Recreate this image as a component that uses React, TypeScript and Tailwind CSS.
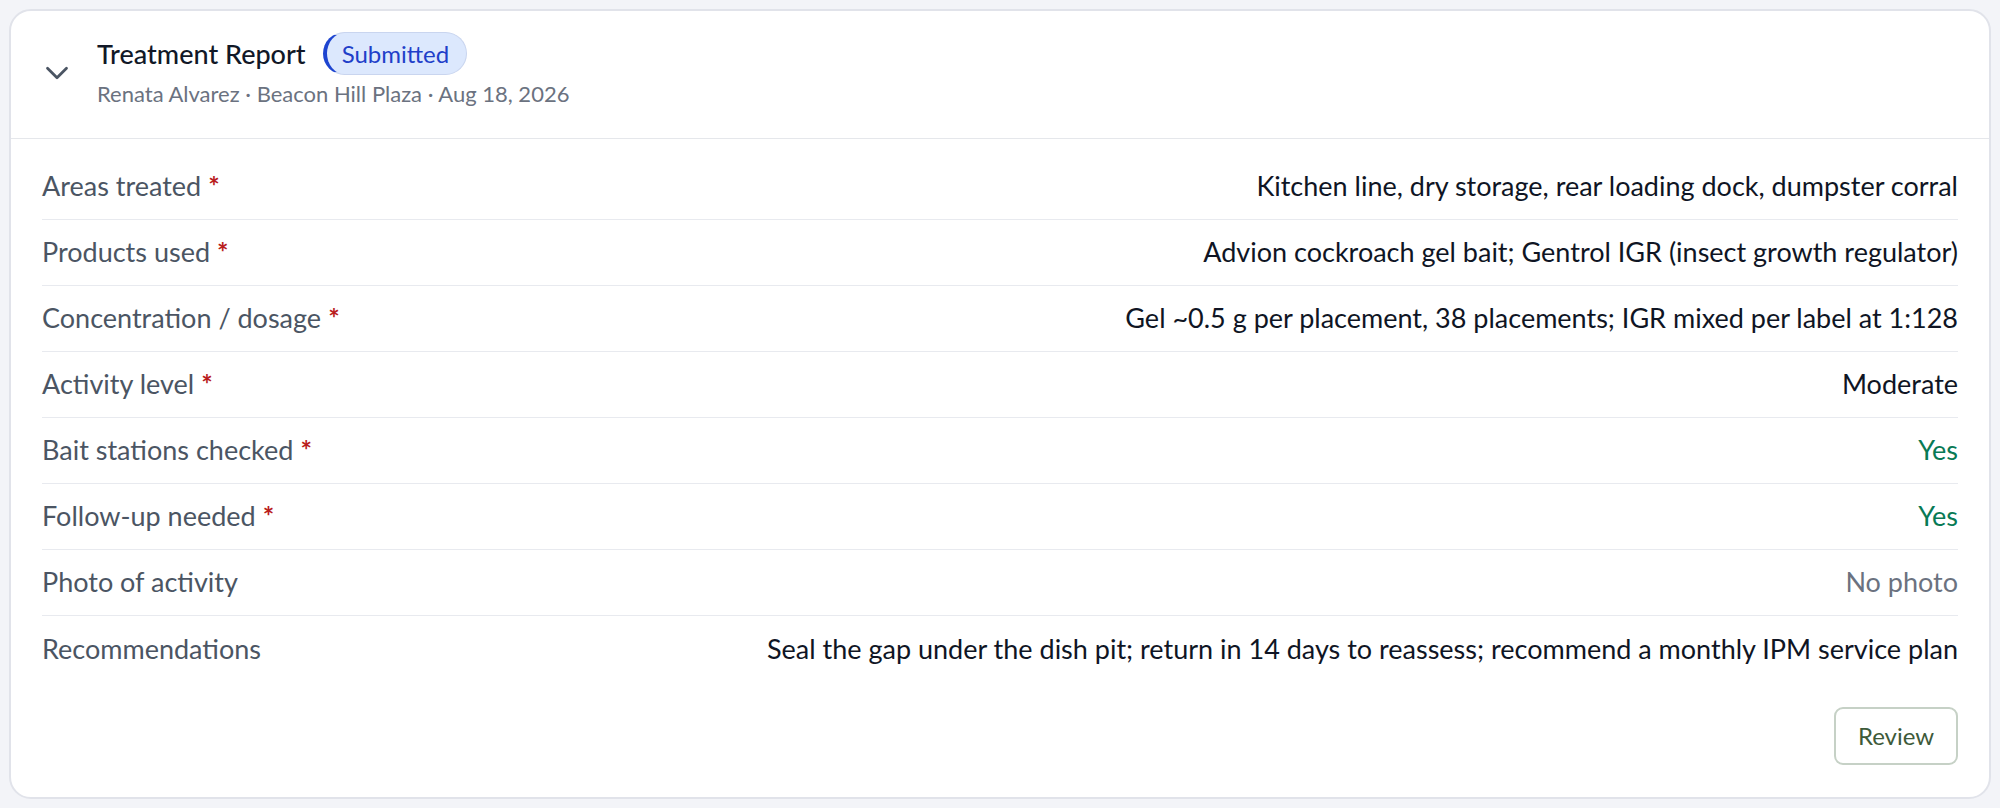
import React from 'react';
import { ChevronDown } from 'lucide-react';

type Tone = 'default' | 'positive' | 'muted';

interface Field {
  label: string;
  value: string;
  required?: boolean;
  tone?: Tone;
}

const fields: Field[] = [
  { label: 'Areas treated', value: 'Kitchen line, dry storage, rear loading dock, dumpster corral', required: true },
  { label: 'Products used', value: 'Advion cockroach gel bait; Gentrol IGR (insect growth regulator)', required: true },
  { label: 'Concentration / dosage', value: 'Gel ~0.5 g per placement, 38 placements; IGR mixed per label at 1:128', required: true },
  { label: 'Activity level', value: 'Moderate', required: true },
  { label: 'Bait stations checked', value: 'Yes', required: true, tone: 'positive' },
  { label: 'Follow-up needed', value: 'Yes', required: true, tone: 'positive' },
  { label: 'Photo of activity', value: 'No photo', tone: 'muted' },
  { label: 'Recommendations', value: 'Seal the gap under the dish pit; return in 14 days to reassess; recommend a monthly IPM service plan' },
];

const toneClass: Record<Tone, string> = {
  default: 'text-[#0f1524]',
  positive: 'text-[#087a55]',
  muted: 'text-[#6b7280]',
};

const StatusBadge: React.FC<{ label: string }> = ({ label }) => (
  <span className="inline-flex items-center h-[43px] pl-[15px] pr-[17px] rounded-full bg-[#dce8fd] border border-[#c9d5ef] border-l-[4px] border-l-[#1d44d0] text-[24px] leading-none text-[#1f3fc9]">
    {label}
  </span>
);

const FieldRow: React.FC<{ field: Field }> = ({ field }) => (
  <div className="flex items-center justify-between gap-8 h-[66px] border-b border-[#e8eaef] last:border-b-0">
    <div className="shrink-0 text-[27px] text-[#4b5563]">
      {field.label}
      {field.required && <span className="ml-[7px] text-[27px] font-bold text-[#b91c1c]">*</span>}
    </div>
    <div className={`text-right text-[27px] ${toneClass[field.tone ?? 'default']}`}>{field.value}</div>
  </div>
);

export default function App() {
  return (
    <div className="min-h-screen bg-[#f3f4f8] p-[9px] font-['Lato',sans-serif]">
      <div className="bg-white border-2 border-[#e1e3ea] rounded-[22px]">
        <div className="flex items-center pl-[27px] pt-[21px] pb-[29px] border-b border-[#e5e7eb]">
          <button className="mt-[5px] text-[#4b5563]" title="Collapse">
            <ChevronDown size={38} strokeWidth={1.75} />
          </button>
          <div className="ml-[21px] flex flex-col">
            <div className="flex items-center gap-[17px]">
              <h3 className="text-[27px] font-medium text-[#111827] leading-none">Treatment Report</h3>
              <StatusBadge label="Submitted" />
            </div>
            <p className="mt-[4px] text-[22px] leading-[30px] text-[#6b7280]">
              Renata Alvarez · Beacon Hill Plaza · Aug 18, 2026
            </p>
          </div>
        </div>

        <div className="px-[31px] pt-[15px] pb-[32px]">
          <div>
            {fields.map((f) => (
              <FieldRow key={f.label} field={f} />
            ))}
          </div>
          <div className="flex justify-end mt-[25px]">
            <button className="w-[124px] h-[58px] rounded-[9px] border-2 border-[#c6d1c6] bg-white text-[24px] text-[#3d5a3a]">
              Review
            </button>
          </div>
        </div>
      </div>
    </div>
  );
}
